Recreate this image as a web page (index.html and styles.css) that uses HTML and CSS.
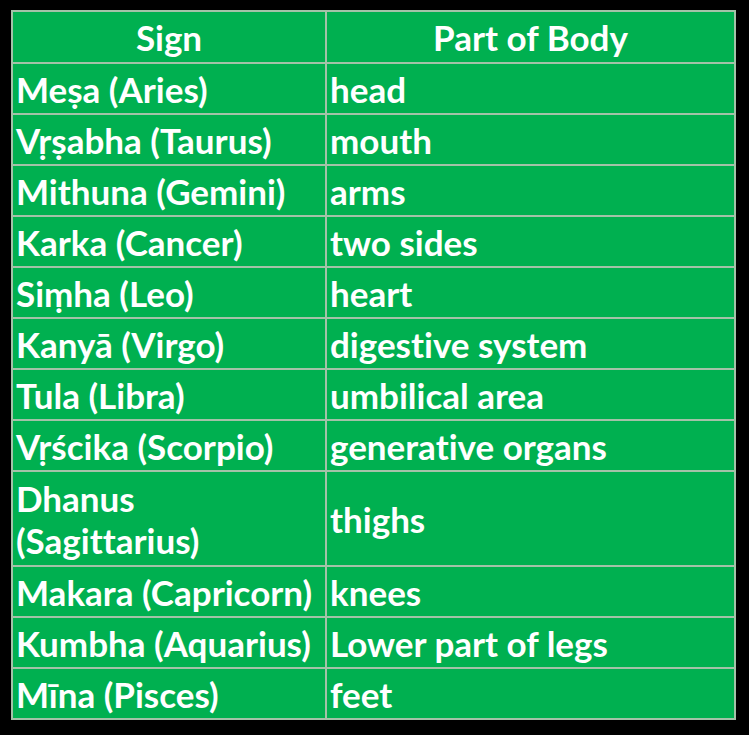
FILE: index.html
```html
<!DOCTYPE html>
<html lang="en">
<head>
<meta charset="utf-8">
<title>Signs and Parts of Body</title>
<link rel="stylesheet" href="styles.css">
</head>
<body>
<table class="zodiac">
  <thead>
    <tr><th class="col-sign">Sign</th><th class="col-part">Part of Body</th></tr>
  </thead>
  <tbody>
    <tr><td>Meṣa (Aries)</td><td>head</td></tr>
    <tr><td>Vṛṣabha (Taurus)</td><td>mouth</td></tr>
    <tr><td>Mithuna (Gemini)</td><td>arms</td></tr>
    <tr><td>Karka (Cancer)</td><td>two sides</td></tr>
    <tr><td>Siṃha (Leo)</td><td>heart</td></tr>
    <tr><td>Kanyā (Virgo)</td><td>digestive system</td></tr>
    <tr><td>Tula (Libra)</td><td>umbilical area</td></tr>
    <tr><td>Vṛścika (Scorpio)</td><td>generative organs</td></tr>
    <tr class="tall"><td>Dhanus<br>(Sagittarius)</td><td>thighs</td></tr>
    <tr><td>Makara (Capricorn)</td><td>knees</td></tr>
    <tr><td>Kumbha (Aquarius)</td><td>Lower part of legs</td></tr>
    <tr><td>Mīna (Pisces)</td><td>feet</td></tr>
  </tbody>
</table>
</body>
</html>
```
FILE: styles.css
```css
html, body {
  margin: 0;
  padding: 0;
  background: #000;
}
body {
  padding: 10px 0 0 11px;
}
.zodiac {
  border-collapse: collapse;
  background: #00b050;
  color: #fff;
  font-family: "Lato", "Open Sans", sans-serif;
  font-weight: 700;
  font-size: 35px;
  font-variant-ligatures: none;
  table-layout: fixed;
  width: 719px;
}
.zodiac th, .zodiac td {
  border: 2px solid #a3c2a8;
  padding: 0 0 0 3px;
  height: 49px;
  line-height: 42px;
  text-align: left;
  white-space: nowrap;
  vertical-align: middle;
}
.zodiac th {
  text-align: center;
  height: 50px;
  padding: 0;
}
.col-sign { width: 312px; }
.col-part { width: 407px; }
.zodiac .tall td {
  height: 93px;
}
```
